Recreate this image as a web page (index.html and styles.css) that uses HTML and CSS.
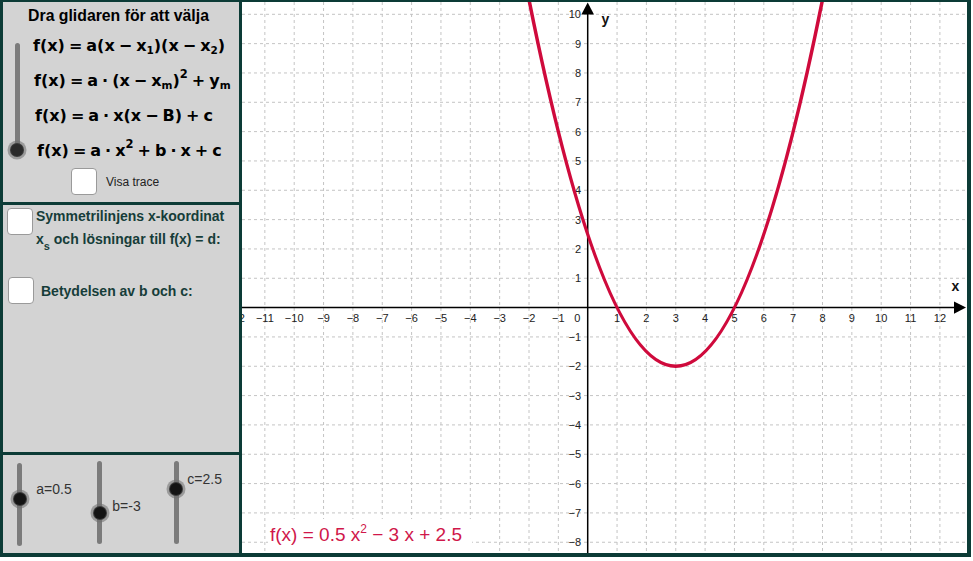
FILE: index.html
```html
<!DOCTYPE html>
<html lang="sv">
<head>
<meta charset="utf-8">
<title>Andragradsfunktion</title>
<link rel="stylesheet" href="styles.css">
</head>
<body>
<div class="app">
  <aside class="side">
    <section class="panel panel-top">
      <h1 class="title">Dra glidaren för att välja</h1>
      <div class="chooser">
        <div class="vslider-main">
          <div class="track track-main"></div>
          <div class="knob knob-main"></div>
        </div>
        <ul class="formulas">
          <li class="f1">f(x)<span class="op">=</span>a(x<span class="op">−</span>x<sub>1</sub>)(x<span class="op">−</span>x<sub>2</sub>)</li>
          <li class="f2">f(x)<span class="op">=</span>a<span class="op">·</span>(x<span class="op">−</span>x<sub>m</sub>)<sup>2</sup><span class="op">+</span>y<sub>m</sub></li>
          <li class="f3">f(x)<span class="op">=</span>a<span class="op">·</span>x(x<span class="op">−</span>B)<span class="op">+</span>c</li>
          <li class="f4">f(x)<span class="op">=</span>a<span class="op">·</span>x<sup>2</sup><span class="op">+</span>b<span class="op">·</span>x<span class="op">+</span>c</li>
        </ul>
      </div>
      <div class="trace">
        <span class="box"></span>
        <span class="trace-text">Visa trace</span>
      </div>
    </section>

    <section class="panel panel-mid">
      <div class="opt opt-1">
        <span class="box box-1"></span>
        <p class="opt-text">Symmetrilinjens x-koordinat<br>x<sub class="sub-s">s</sub> och lösningar till f(x) = d:</p>
      </div>
      <div class="opt opt-2">
        <span class="box box-2"></span>
        <p class="opt-text opt-text-2">Betydelsen av b och c:</p>
      </div>
    </section>

    <section class="panel panel-bot">
      <div class="sgroup sg-a">
        <div class="track strack strack-a"><div class="knob knob-a"></div></div>
        <span class="slabel slabel-a">a=0.5</span>
      </div>
      <div class="sgroup sg-b">
        <div class="track strack strack-b"><div class="knob knob-b"></div></div>
        <span class="slabel slabel-b">b=-3</span>
      </div>
      <div class="sgroup sg-c">
        <div class="track strack strack-c"><div class="knob knob-c"></div></div>
        <span class="slabel slabel-c">c=2.5</span>
      </div>
    </section>
  </aside>

  <main class="graph">
    <svg class="plot" width="725" height="551" viewBox="242 2 725 551" xmlns="http://www.w3.org/2000/svg">
      <path class="grid" d="M264.85 2V553M294.2 2V553M323.55 2V553M352.9 2V553M382.25 2V553M411.6 2V553M440.95 2V553M470.3 2V553M499.65 2V553M529 2V553M558.35 2V553M617.05 2V553M646.4 2V553M675.75 2V553M705.1 2V553M734.45 2V553M763.8 2V553M793.15 2V553M822.5 2V553M851.85 2V553M881.2 2V553M910.55 2V553M939.9 2V553"/>
      <path class="grid" d="M242 14.3H967M242 43.63H967M242 72.96H967M242 102.29H967M242 131.62H967M242 160.95H967M242 190.28H967M242 219.61H967M242 248.94H967M242 278.27H967M242 336.93H967M242 366.26H967M242 395.59H967M242 424.92H967M242 454.25H967M242 483.58H967M242 512.91H967M242 542.24H967"/>

      <path class="axis" d="M242 307.6H958M587.7 553V12"/>
      <polygon class="arrow" points="966,307.6 954,301.4 954,313.8"/>
      <polygon class="arrow" points="587.7,2.5 581.4,14.6 594,14.6"/>

      <g class="tick tick-x">
        <text x="235.5" y="322">−12</text>
        <text x="264.85" y="322">−11</text>
        <text x="294.2" y="322">−10</text>
        <text x="323.55" y="322">−9</text>
        <text x="352.9" y="322">−8</text>
        <text x="382.25" y="322">−7</text>
        <text x="411.6" y="322">−6</text>
        <text x="440.95" y="322">−5</text>
        <text x="470.3" y="322">−4</text>
        <text x="499.65" y="322">−3</text>
        <text x="529" y="322">−2</text>
        <text x="558.35" y="322">−1</text>
        <text x="577.3" y="322">0</text>
        <text x="617.05" y="322">1</text>
        <text x="646.4" y="322">2</text>
        <text x="675.75" y="322">3</text>
        <text x="705.1" y="322">4</text>
        <text x="734.45" y="322">5</text>
        <text x="763.8" y="322">6</text>
        <text x="793.15" y="322">7</text>
        <text x="822.5" y="322">8</text>
        <text x="851.85" y="322">9</text>
        <text x="881.2" y="322">10</text>
        <text x="910.55" y="322">11</text>
        <text x="939.9" y="322">12</text>
      </g>
      <g class="tick tick-y">
        <text x="581" y="18.3">10</text>
        <text x="581" y="47.6">9</text>
        <text x="581" y="77">8</text>
        <text x="581" y="106.3">7</text>
        <text x="581" y="135.6">6</text>
        <text x="581" y="165">5</text>
        <text x="581" y="194.3">4</text>
        <text x="581" y="223.6">3</text>
        <text x="581" y="253">2</text>
        <text x="581" y="282.3">1</text>
        <text x="581" y="340.9">−1</text>
        <text x="581" y="370.3">−2</text>
        <text x="581" y="399.6">−3</text>
        <text x="581" y="428.9">−4</text>
        <text x="581" y="458.3">−5</text>
        <text x="581" y="487.6">−6</text>
        <text x="581" y="516.9">−7</text>
        <text x="581" y="546.2">−8</text>
      </g>
      <text class="axis-name" x="601.5" y="24">y</text>
      <text class="axis-name" x="951.5" y="291">x</text>

      <path class="curve" d="M514.3 -77.4Q675.75 809.9 837.2 -77.4"/>

      <rect class="label-bg" x="268" y="519" width="204" height="34"/>
      <text class="flabel" x="270" y="541">f(x) = 0.5 x<tspan class="fsup" dy="-8">2</tspan><tspan dy="8"> − 3 x + 2.5</tspan></text>
    </svg>
  </main>
</div>
</body>
</html>
```

FILE: styles.css
```css
html, body {
  margin: 0;
  padding: 0;
  background: #ffffff;
}

.app {
  display: flex;
  width: 971px;
  height: 557px;
  box-sizing: border-box;
  border-style: solid;
  border-color: #0c3b36;
  border-width: 2px 4px 4px 3px;
  font-family: "Liberation Sans", Arial, sans-serif;
  color: #000;
}

/* ---------- left column ---------- */
.side {
  width: 239px;
  flex-shrink: 0;
  box-sizing: border-box;
  border-right: 3px solid #0c3b36;
  background: #d3d3d3;
  display: flex;
  flex-direction: column;
}

.panel {
  box-sizing: border-box;
}

.panel-top {
  height: 203px;
  border-bottom: 3px solid #0c3b36;
}

.panel-mid {
  height: 250px;
  border-bottom: 3px solid #0c3b36;
}

.panel-bot {
  flex: 1;
  display: flex;
  align-items: flex-start;
}

.title {
  margin: 0;
  padding: 5px 5px 0 0;
  font-size: 15.8px;
  line-height: 18px;
  font-weight: bold;
  text-align: center;
}

.chooser {
  display: flex;
  margin-top: 2.5px;
}

.vslider-main {
  position: relative;
  width: 30px;
  flex-shrink: 0;
}

.track {
  width: 5px;
  background: #7b7b7b;
  border-radius: 3px;
}

.track-main {
  margin-left: 12px;
  margin-top: 15.5px;
  height: 107px;
}

.knob {
  position: absolute;
  width: 12px;
  height: 12px;
  border-radius: 50%;
  background: #141414;
  box-shadow: 0 0 0 1px #3a3a3a, 0 0 0 3.5px rgba(110, 110, 110, 0.55);
}

.knob-main {
  left: 8px;
  top: 116.5px;
  background: #2a2a2a;
}

.formulas {
  margin: 0;
  padding: 0;
  list-style: none;
  font-family: "DejaVu Sans", "Liberation Sans", sans-serif;
  font-size: 16px;
  font-weight: bold;
  white-space: nowrap;
}

.formulas li {
  height: 35px;
  line-height: 35px;
}

.formulas .f2 { padding-left: 1px; }
.formulas .f3 { padding-left: 2px; }
.formulas .f4 { padding-left: 4px; }

.op {
  margin: 0 4px;
}

.formulas sub {
  font-size: 10.5px;
  line-height: 0;
  vertical-align: -3px;
}

.formulas sup {
  font-size: 11.5px;
  line-height: 0;
  vertical-align: 8px;
}

.trace {
  display: flex;
  align-items: center;
  gap: 9px;
  margin-top: 0.5px;
  padding-left: 68px;
}

.box {
  display: block;
  flex-shrink: 0;
  width: 26px;
  height: 27px;
  box-sizing: border-box;
  background: #ffffff;
  border: 1.5px solid #9a9a9a;
  border-radius: 4px;
}

.trace-text {
  font-size: 12px;
  color: #222;
}

/* middle panel */
.opt {
  display: flex;
}

.opt-1 {
  align-items: flex-start;
}

.box-1 {
  margin: 3px 0 0 4px;
}

.opt-text {
  margin: 0 0 0 3px;
  font-size: 14px;
  line-height: 23.3px;
  font-weight: bold;
  color: #163d39;
  white-space: nowrap;
}

.sub-s {
  font-size: 11px;
  line-height: 0;
  vertical-align: -6px;
}

.opt-2 {
  align-items: center;
  margin-top: 25.7px;
}

.box-2 {
  margin-left: 5px;
}

.opt-text-2 {
  margin-left: 7px;
  padding-top: 2px;
}

/* bottom sliders */
.sgroup {
  display: flex;
  align-items: flex-start;
  flex-shrink: 0;
}

.sg-a { margin-left: 14.3px; width: 80px; }
.sg-b { width: 76.7px; }
.sg-c { width: 60px; }

.strack {
  position: relative;
  flex-shrink: 0;
  height: 83.3px;
}

.strack-a { margin-top: 7.7px; }
.strack-b { margin-top: 5.7px; }
.strack-c { margin-top: 5.7px; }

.knob-a { left: -3.5px; top: 30.6px; }
.knob-b { left: -3.5px; top: 46.6px; }
.knob-c { left: -3.5px; top: 22.6px; }

.slabel {
  font-size: 14px;
  line-height: 16px;
  color: #333;
  white-space: nowrap;
}

.slabel-a { margin: 26.3px 0 0 14px; }
.slabel-b { margin: 42.7px 0 0 10px; }
.slabel-c { margin: 16.3px 0 0 8.3px; }

/* ---------- graph ---------- */
.graph {
  flex: 1;
  background: #ffffff;
  overflow: hidden;
}

.plot {
  display: block;
  overflow: hidden;
}

.grid {
  fill: none;
  stroke: #c4c4c4;
  stroke-width: 1;
  stroke-dasharray: 3 3;
}

.axis {
  fill: none;
  stroke: #000;
  stroke-width: 1.5;
}

.arrow {
  fill: #000;
}

.tick {
  font-family: "Liberation Sans", Arial, sans-serif;
  font-size: 11px;
  fill: #222;
}

.tick-x text {
  text-anchor: middle;
}

.tick-y text {
  text-anchor: end;
}

.axis-name {
  font-family: "Liberation Sans", Arial, sans-serif;
  font-size: 14px;
  font-weight: bold;
  fill: #111;
}

.curve {
  fill: none;
  stroke: #cf0a3c;
  stroke-width: 3.5;
}

.label-bg {
  fill: #ffffff;
}

.flabel {
  font-family: "Liberation Sans", Arial, sans-serif;
  font-size: 19px;
  fill: #d0174a;
  white-space: pre;
}

.fsup {
  font-size: 12px;
}
```
